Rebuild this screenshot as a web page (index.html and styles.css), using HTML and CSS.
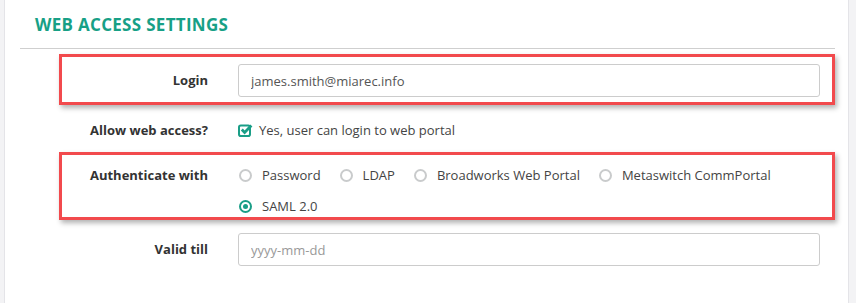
FILE: index.html
```html
<!DOCTYPE html>
<html>
<head>
    <title>Web Access Settings</title>
    <link rel="stylesheet" href="styles.css">
</head>
<body>
    <div class="panel">
        <div class="panel-header">
            <h2>Web Access Settings</h2>
        </div>

        <form class="settings-form">
            <!-- Login -->
            <div class="form-row highlight">
                <label class="form-label">Login</label>
                <div class="form-field">
                    <input type="text" class="text-input" value="james.smith@miarec.info">
                </div>
            </div>

            <!-- Allow web access -->
            <div class="form-row plain">
                <label class="form-label">Allow web access?</label>
                <div class="form-field">
                    <span class="check-option">
                        <svg class="check-icon" width="15" height="14" viewBox="0 0 15 14">
                            <rect x="1" y="2.5" width="11" height="10.5" rx="1.8" fill="none" stroke="#1a9e87" stroke-width="2"/>
                            <path d="M3.8 6.6 L6.6 9.4 L13.4 2.4" fill="none" stroke="#1a9e87" stroke-width="2.8"/>
                        </svg>
                        Yes, user can login to web portal
                    </span>
                </div>
            </div>

            <!-- Authenticate with -->
            <div class="form-row highlight radios-row">
                <label class="form-label">Authenticate with</label>
                <div class="form-field radio-group">
                    <span class="radio-option"><span class="radio"></span>Password</span>
                    <span class="radio-option"><span class="radio"></span>LDAP</span>
                    <span class="radio-option"><span class="radio"></span>Broadworks Web Portal</span>
                    <span class="radio-option"><span class="radio"></span>Metaswitch CommPortal</span>
                    <span class="radio-option"><span class="radio checked"></span>SAML 2.0</span>
                </div>
            </div>

            <!-- Valid till -->
            <div class="form-row plain last">
                <label class="form-label">Valid till</label>
                <div class="form-field">
                    <input type="text" class="text-input" placeholder="yyyy-mm-dd">
                </div>
            </div>
        </form>
    </div>
</body>
</html>
```

FILE: styles.css
```css
body {
    margin: 0;
    background-color: #f3f3f5;
    font-family: 'Open Sans', 'Noto Sans', sans-serif;
    font-size: 13px;
    color: #444;
    height: 303px;
    overflow: hidden;
}

.panel {
    margin-left: 4px;
    width: 843px;
    min-height: 303px;
    background-color: white;
    border-left: 1px solid #e4e4e8;
    border-right: 1px solid #e4e4e8;
}

.panel-header {
    margin: 0 13px 0 15px;
    padding: 0 15px;
    height: 48px;
    border-bottom: 1px solid #cfcfcf;
    display: flex;
    align-items: center;
}

.panel-header h2 {
    margin: 0;
    font-size: 17px;
    font-weight: 700;
    text-transform: uppercase;
    color: #17a086;
    letter-spacing: 0.3px;
    line-height: 20px;
    margin-top: 1px;
}

.settings-form {
    margin: 5px 13px 0 54px;
}

.form-row {
    display: flex;
    align-items: flex-start;
    border: 3px solid transparent;
    padding: 0 12px 0 0;
}

.form-row.highlight {
    border-color: #f24a4d;
    box-shadow: 2px 3px 5px rgba(0, 0, 0, 0.3);
}

.form-label {
    width: 146px;
    flex-shrink: 0;
    margin-right: 30px;
    text-align: right;
    font-weight: 700;
    color: #333;
    line-height: 20px;
}

.form-field {
    flex: 1;
}

.text-input {
    display: block;
    box-sizing: border-box;
    width: 100%;
    height: 33px;
    padding: 0 12px;
    border: 1px solid #cccccc;
    border-radius: 3px;
    font-family: inherit;
    font-size: 13px;
    color: #555;
}

.text-input::placeholder {
    color: #999;
}

/* row spacing */
.form-row.highlight:first-child {
    padding-top: 7px;
    padding-bottom: 5px;
}

.form-row.highlight:first-child .form-label {
    margin-top: 6px;
}

.form-row.plain {
    padding-top: 12px;
    padding-bottom: 9px;
}

.form-row.plain.last {
    padding-top: 10px;
}

.form-row.last .form-label {
    margin-top: 6px;
}

.radios-row {
    padding-top: 10px;
    padding-bottom: 1px;
}

.check-option {
    display: flex;
    align-items: center;
    line-height: 20px;
}

.check-icon {
    margin: 0 6px 0 0;
}

.radio-group {
    display: flex;
    flex-wrap: wrap;
    row-gap: 11px;
}

.radio-option {
    display: flex;
    align-items: center;
    line-height: 20px;
    margin-right: 18px;
    padding-left: 1px;
}

.radio {
    box-sizing: border-box;
    width: 13px;
    height: 13px;
    border: 2px solid #c9cbcc;
    border-radius: 50%;
    margin-right: 10px;
    display: flex;
    align-items: center;
    justify-content: center;
}

.radio.checked {
    border-color: #1a9e87;
}

.radio.checked::after {
    content: "";
    width: 5px;
    height: 5px;
    border-radius: 50%;
    background-color: #1a9e87;
}
```
